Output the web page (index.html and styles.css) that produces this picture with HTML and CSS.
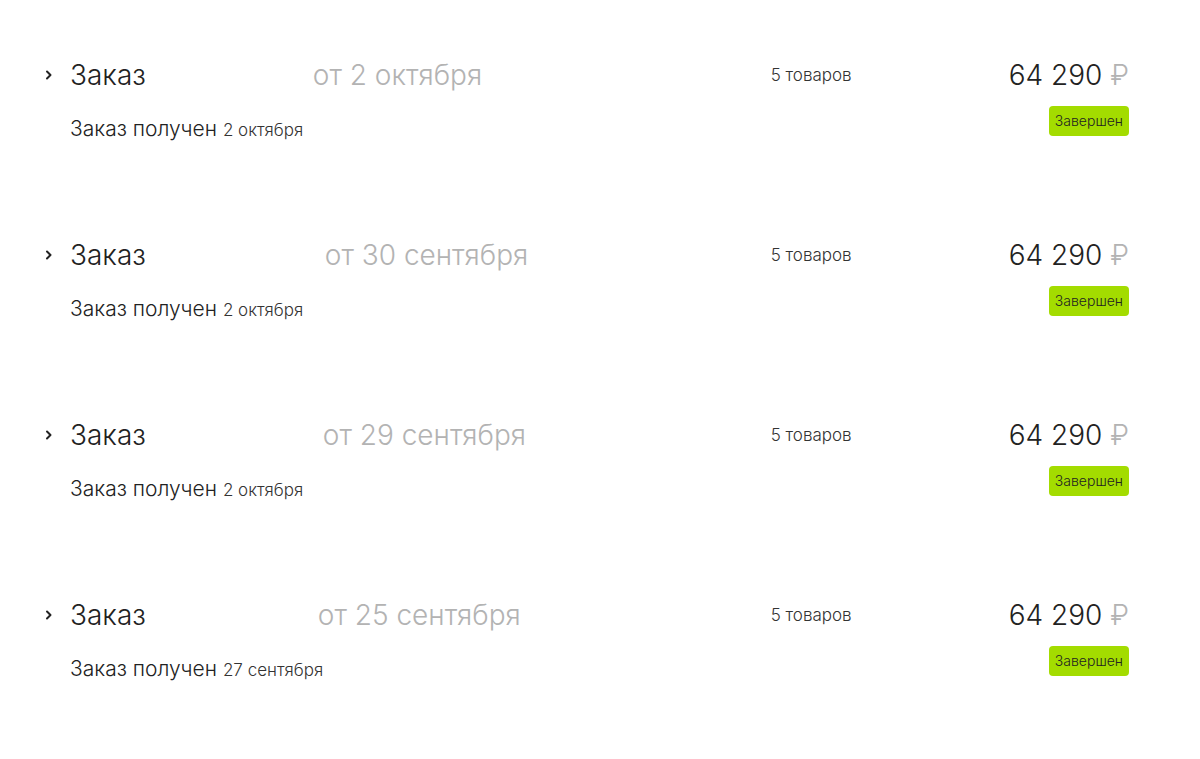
FILE: index.html
```html
<!doctype html>
<html lang="ru">
    <head>
        <meta charset="utf-8">
        <title>Мои заказы</title>
        <link rel="stylesheet" href="styles.css">
    </head>
    <body>
        <div class="orders">

            <div class="order">
                <svg class="chevron" width="10" height="12" viewBox="0 0 10 12"><path d="M3 2.5 L6.5 6 L3 9.5" /></svg>
                <div class="info">
                    <div class="title">Заказ<span class="masked" style="width: 160px"></span><span class="date">от 2 октября</span></div>
                    <div class="status">Заказ получен <span class="small">2 октября</span></div>
                </div>
                <div class="count">5 товаров</div>
                <div class="total">
                    <div class="price">64 290 <span class="rub">₽</span></div>
                    <div class="badge">Завершен</div>
                </div>
            </div>

            <div class="order">
                <svg class="chevron" width="10" height="12" viewBox="0 0 10 12"><path d="M3 2.5 L6.5 6 L3 9.5" /></svg>
                <div class="info">
                    <div class="title">Заказ<span class="masked" style="width: 172px"></span><span class="date">от 30 сентября</span></div>
                    <div class="status">Заказ получен <span class="small">2 октября</span></div>
                </div>
                <div class="count">5 товаров</div>
                <div class="total">
                    <div class="price">64 290 <span class="rub">₽</span></div>
                    <div class="badge">Завершен</div>
                </div>
            </div>

            <div class="order">
                <svg class="chevron" width="10" height="12" viewBox="0 0 10 12"><path d="M3 2.5 L6.5 6 L3 9.5" /></svg>
                <div class="info">
                    <div class="title">Заказ<span class="masked" style="width: 170px"></span><span class="date">от 29 сентября</span></div>
                    <div class="status">Заказ получен <span class="small">2 октября</span></div>
                </div>
                <div class="count">5 товаров</div>
                <div class="total">
                    <div class="price">64 290 <span class="rub">₽</span></div>
                    <div class="badge">Завершен</div>
                </div>
            </div>

            <div class="order">
                <svg class="chevron" width="10" height="12" viewBox="0 0 10 12"><path d="M3 2.5 L6.5 6 L3 9.5" /></svg>
                <div class="info">
                    <div class="title">Заказ<span class="masked" style="width: 165px"></span><span class="date">от 25 сентября</span></div>
                    <div class="status">Заказ получен <span class="small">27 сентября</span></div>
                </div>
                <div class="count">5 товаров</div>
                <div class="total">
                    <div class="price">64 290 <span class="rub">₽</span></div>
                    <div class="badge">Завершен</div>
                </div>
            </div>

        </div>
    </body>
</html>
```

FILE: styles.css
```css
body {
    margin: 0;
    background: #fff;
    color: #222;
    font-family: Inter, Roboto, 'Liberation Sans', sans-serif;
}

.orders {
    padding: 0 71px 0 44px;
}

.order {
    display: flex;
    align-items: flex-start;
    height: 180px;
    padding-top: 59px;
    box-sizing: border-box;
}

.chevron {
    margin-top: 10px;
    width: 10px;
    height: 12px;
    flex: none;
}

.chevron path {
    fill: none;
    stroke: #222;
    stroke-width: 2;
    stroke-linecap: round;
    stroke-linejoin: round;
}

.info {
    flex: 1;
    padding-left: 16px;
}

.title {
    display: flex;
    font-size: 28px;
    font-weight: 300;
    line-height: 32px;
}

.masked {
    display: inline-block;
}

.date {
    color: #b3b3b3;
    padding-left: 7px;
}

.status {
    margin-top: 26px;
    font-size: 21px;
    font-weight: 300;
    line-height: 24px;
    color: #222;
}

.small {
    font-size: 17px;
    color: #333;
}

.count {
    width: 238px;
    font-size: 17px;
    font-weight: 300;
    line-height: 33px;
    color: #333;
}

.total {
    display: flex;
    flex-direction: column;
    align-items: flex-end;
}

.price {
    font-size: 28px;
    font-weight: 300;
    line-height: 32px;
}

.rub {
    color: #b3b3b3;
}

.badge {
    margin-top: 15px;
    background: #a3dc00;
    border-radius: 4px;
    padding: 0 6px;
    height: 30px;
    line-height: 30px;
    font-size: 14px;
    font-weight: 300;
    color: #222;
}
```
